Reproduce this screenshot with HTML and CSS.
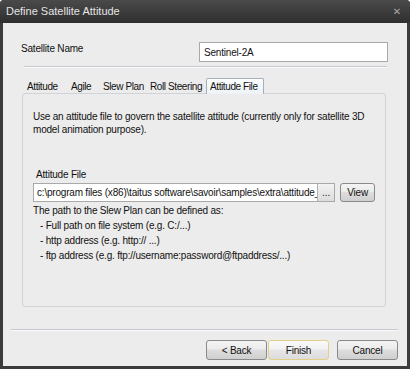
FILE: index.html
```html
<!DOCTYPE html>
<html lang="en">

<head>
  <meta charset="UTF-8">
  <meta name="viewport" content="width=device-width, initial-scale=1.0">
  <title>Define Satellite Attitude</title>
  <link rel="stylesheet" href="styles.css">
</head>

<body>
  <div class="window">
    <div class="titlebar">
      <span class="title">Define Satellite Attitude</span>
      <span class="close">&#x2715;</span>
    </div>
    <div class="client">
      <div class="name-row">
        <label for="satName">Satellite Name</label>
        <input type="text" id="satName" value="Sentinel-2A">
      </div>
      <div class="sep top-sep"></div>

      <div class="tabs">
        <span class="tab tab-attitude">Attitude</span>
        <span class="tab tab-agile">Agile</span>
        <span class="tab tab-slew">Slew Plan</span>
        <span class="tab tab-roll">Roll Steering</span>
        <span class="tab tab-file active">Attitude File</span>
      </div>
      <div class="panel">
        <p class="desc">Use an attitude file to govern the satellite attitude (currently only for satellite 3D model animation purpose).</p>
        <div class="file-group">
          <label for="attFile">Attitude File</label>
          <div class="file-row">
            <div class="file-box">
              <input type="text" id="attFile" value="c:\program files (x86)\taitus software\savoir\samples\extra\attitude_file.txt">
              <button class="browse">...</button>
            </div>
            <button class="btn view">View</button>
          </div>
        </div>
        <p class="help">The path to the Slew Plan can be defined as:</p>
        <ul class="help-list">
          <li>- Full path on file system (e.g. C:/...)</li>
          <li>- http address (e.g. http:// ...)</li>
          <li>- ftp address (e.g. ftp://username:password@ftpaddress/...)</li>
        </ul>
      </div>

      <div class="sep bottom-sep"></div>
      <div class="actions">
        <button class="btn">&lt; Back</button>
        <button class="btn default">Finish</button>
        <button class="btn cancel">Cancel</button>
      </div>
    </div>
  </div>
</body>

</html>
```

FILE: styles.css
```css
* {
  box-sizing: border-box;
}

body {
  margin: 0;
  font-family: "Liberation Sans", Arial, sans-serif;
  font-size: 10px;
  letter-spacing: -0.2px;
  color: #111;
}

.window {
  width: 410px;
  height: 369px;
  background: #3b3b3b;
  padding: 0 3px 3px 3px;
  display: flex;
  flex-direction: column;
  border-radius: 4px 4px 0 0;
}

.titlebar {
  height: 23px;
  display: flex;
  align-items: center;
  justify-content: space-between;
  margin: 0 -3px;
  padding: 0 6px 1px 6px;
  background: linear-gradient(#4a4a4a, #2e2e2e);
  border-radius: 4px 4px 0 0;
}

.title {
  color: #e4e4e4;
  font-size: 11px;
  letter-spacing: 0;
}

.close {
  color: #a8a8a8;
  font-family: "DejaVu Sans", sans-serif;
  font-size: 10px;
  font-weight: bold;
  margin-right: 3px;
}

.client {
  flex: 1;
  background: #ececec;
  display: flex;
  flex-direction: column;
}

.name-row {
  display: flex;
  align-items: flex-start;
  justify-content: space-between;
  margin: 19px 19px 0 18px;
  height: 20px;
}

.name-row label {
  padding-top: 1px;
}

.name-row input {
  width: 189px;
  height: 20px;
  border: 1px solid #a9a9a9;
  background: #fff;
  font: inherit;
  letter-spacing: inherit;
  padding: 0 4px;
  color: #111;
}

.sep {
  height: 2px;
  border-top: 1px solid #c4c8cf;
  border-bottom: 1px solid #fafafa;
}

.top-sep {
  margin: 4px 20px 0 21px;
}

.tabs {
  display: flex;
  margin: 10px 0 0 19px;
  height: 16px;
  position: relative;
  z-index: 1;
  letter-spacing: -0.4px;
}

.tab {
  padding: 3px 0 0 5px;
  height: 16px;
  white-space: nowrap;
}

.tab-attitude { width: 44px; }
.tab-agile { width: 32px; }
.tab-slew { width: 47px; }
.tab-roll { width: 61px; }

.tab.active {
  width: 58px;
  background: linear-gradient(#fbfdfe, #eef3f7);
  border: 1px solid #a7afba;
  border-bottom: none;
  border-radius: 2px 2px 0 0;
  padding: 2px 0 0 3px;
  height: 16px;
}

.panel {
  margin: -1px 21px 0 19px;
  height: 214px;
  border: 1px solid #d0d3d7;
  border-radius: 3px;
  background: #ececec;
  padding: 16px 10px 0 10px;
}

.desc {
  margin: 0;
  line-height: 13px;
}

.file-group {
  margin-top: 32px;
}

.file-group label {
  display: block;
  margin-left: 3px;
  line-height: 13px;
}

.file-row {
  display: flex;
  margin-top: 2px;
  gap: 5px;
}

.file-box {
  display: flex;
  width: 304px;
  height: 19px;
  border: 1px solid #a9a9a9;
  background: #fff;
}

.file-box input {
  flex: 1;
  min-width: 0;
  border: none;
  font: inherit;
  letter-spacing: inherit;
  padding: 0 0 0 3px;
  color: #111;
  background: #fff;
}

.browse {
  width: 17px;
  border: none;
  border-left: 1px solid #b0b0b0;
  background: linear-gradient(#f3f3f3, #dcdcdc);
  font: inherit;
  padding: 0;
  line-height: 8px;
  color: #222;
}

.btn {
  font: inherit;
  letter-spacing: inherit;
  color: #111;
  border: 1px solid #8a8a8a;
  border-radius: 3px;
  background: linear-gradient(#f4f4f4 0%, #ebebeb 45%, #dddddd 50%, #cfcfcf 100%);
  padding: 0;
  height: 19px;
}

.view {
  width: 35px;
}

.help {
  margin: 1px 0 0 0;
  line-height: 15px;
}

.help-list {
  list-style: none;
  margin: 0;
  padding: 0 0 0 7px;
  line-height: 15px;
}

.bottom-sep {
  margin: 22px 9px 0 8px;
}

.actions {
  display: flex;
  justify-content: flex-end;
  margin: 9px 9px 0 0;
}

.actions .btn {
  width: 61px;
  height: 20px;
}

.actions .default {
  border-color: #e2d08a;
  background: linear-gradient(#fafafa 0%, #f1f1f1 45%, #e6e6e6 50%, #dddddd 100%);
  margin-left: 1px;
}

.actions .cancel {
  margin-left: 8px;
}
```
